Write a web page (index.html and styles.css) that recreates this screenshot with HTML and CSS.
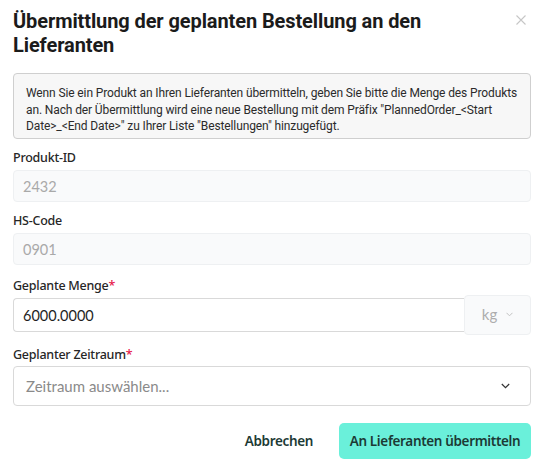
FILE: index.html
```html
<!DOCTYPE html>
<html lang="de">
<head>
<meta charset="utf-8">
<link rel="stylesheet" href="styles.css">
</head>
<body>
<div class="modal">
  <div class="head">
    <h1 class="title">Übermittlung der geplanten Bestellung an den Lieferanten</h1>
    <button class="close" aria-label="Schließen">
      <svg width="10" height="10" viewBox="0 0 10 10"><path d="M0.5 0.5 L9.5 9.5 M9.5 0.5 L0.5 9.5" stroke="#c6c6c6" stroke-width="1.1" fill="none"/></svg>
    </button>
  </div>
  <div class="info">Wenn Sie ein Produkt an Ihren Lieferanten übermitteln, geben Sie bitte die Menge des Produkts an. Nach der Übermittlung wird eine neue Bestellung mit dem Präfix "PlannedOrder_&lt;Start Date&gt;_&lt;End Date&gt;" zu Ihrer Liste "Bestellungen" hinzugefügt.</div>

  <div class="field f1">
    <div class="label">Produkt-ID</div>
    <div class="input disabled">2432</div>
  </div>
  <div class="field f2">
    <div class="label">HS-Code</div>
    <div class="input disabled">0901</div>
  </div>
  <div class="field f3">
    <div class="label">Geplante Menge<span class="req">*</span></div>
    <div class="group">
      <div class="input qty"><span class="val">6000.0000</span></div>
      <div class="addon">kg
        <svg width="7" height="5" viewBox="0 0 7 5"><path d="M0.5 0.8 L3.5 3.8 L6.5 0.8" stroke="#c2c2c2" stroke-width="1" fill="none"/></svg>
      </div>
    </div>
  </div>
  <div class="field f4">
    <div class="label">Geplanter Zeitraum<span class="req">*</span></div>
    <div class="input select"><span class="ph">Zeitraum auswählen...</span>
      <svg width="9" height="6" viewBox="0 0 9 6"><path d="M0.8 1 L4.5 4.7 L8.2 1" stroke="#333" stroke-width="1.2" fill="none"/></svg>
    </div>
  </div>
  <div class="footer">
    <button class="btn cancel">Abbrechen</button>
    <button class="btn primary">An Lieferanten übermitteln</button>
  </div>
</div>
</body>
</html>
```
FILE: styles.css
```css
html, body { margin: 0; padding: 0; background: #fff; }
.modal { width: 518px; padding: 0 11px 0 13px; font-family: "Noto Sans", sans-serif; }
.head { display: flex; justify-content: space-between; align-items: flex-start; padding-top: 9px; }
.title { margin: 0; font-family: Roboto, sans-serif; font-size: 20px; line-height: 24px; font-weight: 700; color: #1b1b1b; width: 470px; letter-spacing: -0.1px; }
.close { border: 0; background: none; padding: 0; margin: 6px 5px 0 0; width: 10px; height: 10px; display: block; }
.close svg { display: block; }
.info { margin-top: 16px; height: 66px; box-sizing: border-box; border: 1px solid #cfcfcf; border-radius: 4px; background: #f7f7f7; padding: 11px 12px 0 12px; font-family: Roboto, sans-serif; font-size: 12px; line-height: 16.5px; letter-spacing: -0.12px; color: #2b2b2b; }
.field { display: flex; flex-direction: column; }
.label { font-family: "Noto Sans", sans-serif; font-size: 12.5px; font-weight: 500; line-height: 18px; letter-spacing: -0.25px; color: #262626; margin-bottom: 3px; }
.req { color: #e6194b; }
.f1 { margin-top: 10px; }
.f2 { margin-top: 10px; }
.f3 { margin-top: 12px; }
.f4 { margin-top: 11px; }
.input { box-sizing: border-box; height: 32px; border: 1px solid #d9d9d9; border-radius: 4px; display: flex; align-items: center; padding: 0 9px; font-family: Lato, sans-serif; font-size: 14.5px; color: #1f1f1f; }
.disabled { background: #f9fafb; border-color: #eef0f2; color: #a9a9a9; }
.group { display: flex; align-items: center; margin-top: -3px; }
.qty { flex: 1; height: 34px; border-right: 0; border-radius: 4px 0 0 4px; }
.val { padding-left: 0; }
.addon { box-sizing: border-box; width: 67px; height: 40px; border: 1px solid #eef0f2; border-radius: 4px; background: #f9fafb; display: flex; align-items: center; justify-content: center; gap: 9px; font-family: Lato, sans-serif; font-size: 15px; color: #adadad; padding-bottom: 2px; }
.select { height: 40px; justify-content: space-between; padding: 0 20px 0 12px; margin-top: -1px; }
.ph { color: #8a8a8a; font-size: 15px; }
.footer { display: flex; justify-content: flex-end; align-items: center; margin-top: 17px; gap: 26px; }
.btn { font-family: "Noto Sans", sans-serif; font-size: 13.5px; font-weight: 600; letter-spacing: -0.35px; color: #1c3a35; border: 0; background: none; height: 36px; border-radius: 5px; padding: 0; }
.primary { background: #6af0da; width: 192px; }
.cancel { padding: 0; }
```
